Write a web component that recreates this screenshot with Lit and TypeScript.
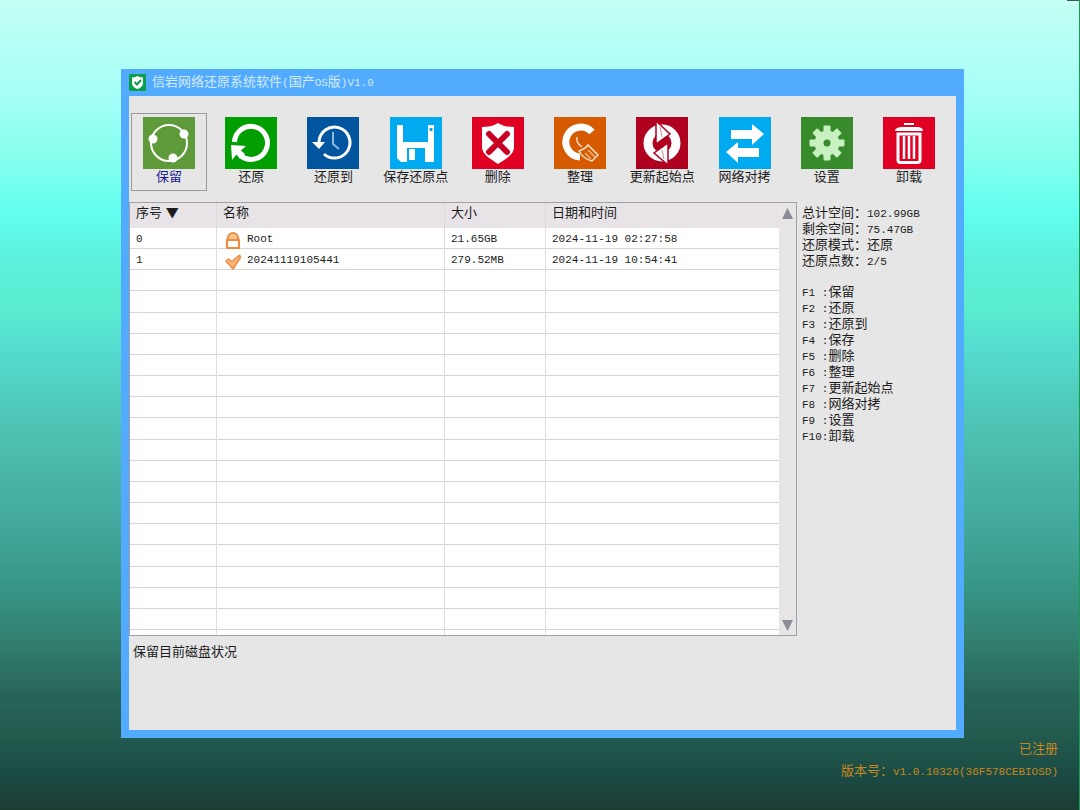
import { LitElement, html, css, svg } from "lit";
import { customElement, state } from "lit/decorators.js";

const tools = [
  { key: "F1 ", label: "保留", hint: "保留", status: "保留目前磁盘状况", bg: "#5f9a3a", art: svg`
    <circle cx="26" cy="26" r="18" fill="none" stroke="#fff" stroke-width="2"/>
    <circle cx="10" cy="22" r="4.5" fill="#fff"/><circle cx="41" cy="17" r="4.5" fill="#fff"/><circle cx="30" cy="41" r="4.5" fill="#fff"/>` },
  { key: "F2 ", label: "还原", hint: "还原", status: "还原", bg: "#009e00", art: svg`
    <path d="M9.500 25A16.500 16.500 0 1 1 16 39" fill="none" stroke="#fff" stroke-width="5"/>
    <path d="M6 28L21 29L16 33.500L20 37L15 42L11.500 37.500L7 43Z" fill="#fff"/>` },
  { key: "F3 ", label: "还原到", hint: "还原到", status: "还原到", bg: "#00559f", art: svg`
    <path d="M12 25A15.500 15.500 0 1 1 17 37" fill="none" stroke="#fff" stroke-width="3"/>
    <path d="M5 25H18L12 32Z" fill="#fff"/>
    <path d="M26 15V27L32 32" fill="none" stroke="#8cb8e0" stroke-width="2"/>` },
  { key: "F4 ", label: "保存还原点", hint: "保存", status: "保存还原点", bg: "#00aaf0", art: svg`
    <path d="M7 8H13V25H38V8H44V45H11L7 41Z" fill="#fff"/>
    <path d="M17 31H35V45H17Z" fill="#00aaf0"/><path d="M19 32H25V43H19Z" fill="#fff"/>
    <path d="M39.500 11H42.500V14H39.500Z" fill="#00aaf0"/>` },
  { key: "F5 ", label: "删除", hint: "删除", status: "删除", bg: "#e00024", art: svg`
    <path d="M26 6C31 9 36 10 42 10V30C42 38 33 42 26 47C19 42 10 38 10 30V10C16 10 21 9 26 6Z" fill="#fff"/>
    <path d="M17 17L35 35M35 17L17 35" stroke="#c80024" stroke-width="6" stroke-linecap="round"/>` },
  { key: "F6 ", label: "整理", hint: "整理", status: "整理", bg: "#d65a00", art: svg`
    <path d="M38 15A15 15 0 1 0 26 40" fill="none" stroke="#fff" stroke-width="7"/>
    <path d="M22 20C25 20 28 24 30 29L34 28L44 38L38 45C33 44 28 40 25 34L27 30C24 27 22 24 22 20Z" fill="#d65a00" stroke="#d65a00" stroke-width="2"/>
    <path d="M23 20C22 25 25 28 28 30M25 34C28 33 32 31 34 28L44 38L38 44C33 43 29 41 25 34Z" fill="none" stroke="#fbe0c8" stroke-width="1.500"/>
    <path d="M31 36L37 42M34 33L41 40" stroke="#f3b888" stroke-width="1.500"/>` },
  { key: "F7 ", label: "更新起始点", hint: "更新起始点", status: "更新起始点", bg: "#b00020", art: svg`
    <circle cx="26" cy="26" r="14" fill="none" stroke="#fff" stroke-width="9"/>
    <path d="M20 4L34 17L20 27Z" fill="#fff" stroke="#b00020" stroke-width="1.500"/>
    <path d="M32 48L18 36L32 26Z" fill="#fff" stroke="#b00020" stroke-width="1.500"/>
    <path d="M24 10L26 20M28 42L26 33" stroke="#d88a98" stroke-width="1"/>` },
  { key: "F8 ", label: "网络对拷", hint: "网络对拷", status: "网络对拷", bg: "#00aaf0", art: svg`
    <path d="M12 13H33V7L45 17L33 28V22H12Z" fill="#fff"/><path d="M40 31H19V25L7 35L19 46V40H40Z" fill="#fff"/>` },
  { key: "F9 ", label: "设置", hint: "设置", status: "设置", bg: "#378b2b", art: svg`
    ${[0, 45, 90, 135].map((a) => svg`<rect x="22.500" y="8.500" width="7" height="35" rx="1" fill="#c8f0c0" transform="rotate(${a} 26 26)"/>`)}
    <circle cx="26" cy="26" r="12.500" fill="#c8f0c0"/><circle cx="26" cy="26" r="3.500" fill="#378b2b"/>` },
  { key: "F10", label: "卸载", hint: "卸载", status: "卸载", bg: "#e00024", art: svg`
    <path d="M12 14C12 11 16 10 19 10H34C37 10 40 11 40 14Z" fill="#fff"/><path d="M21 7H31" stroke="#fff" stroke-width="2"/>
    <path d="M15 17H37V43Q37 45.500 34.500 45.500H17.500Q15 45.500 15 43Z" fill="none" stroke="#fff" stroke-width="3"/>
    <path d="M21 19V42M26 19V42M31 19V42" stroke="#fff" stroke-width="2.500"/>` },
];

const lockIcon = svg`<path d="M3 8V6A5 5 0 0 1 13 6V8" fill="#fbc690" stroke="#f08a3c" stroke-width="2"/>
  <rect x="2" y="8" width="12" height="8" fill="#fff" stroke="#f08a3c" stroke-width="2"/>`;
const checkIcon = svg`<path d="M1 8L3.500 6L7 8.500L14 2.500L16 3.500L8 16Z" fill="#fbb680" stroke="#f08a3c" stroke-width="1.500" stroke-linejoin="round"/>`;

const points = [
  { id: "0", icon: lockIcon, name: "Root", size: "21.65GB", date: "2024-11-19 02:27:58" },
  { id: "1", icon: checkIcon, name: "20241119105441", size: "279.52MB", date: "2024-11-19 10:54:41" },
];

@customElement("app-root")
export class AppRoot extends LitElement {
  @state() private active = 0;

  static styles = css`
    :host {
      position: relative;
      display: flex;
      flex-direction: column;
      min-height: 100vh;
      box-sizing: border-box;
      padding-top: 69px;
      border-right: 1px solid #1c9a50;
      font: 13px/16px "Liberation Sans", "Noto Sans CJK SC", sans-serif;
      color: #1c1c1c;
      background: linear-gradient(#c4fff4 0, #a4fff8 12%, #84ffee 20%, #62fff0 26%, #5cf0dc 32%, #5aecd0 38%, #54dcd0 43%, #50ccbc 49%, #4ab4a8 59%, #44aaa0 64%, #389888 72%, #328070 79%, #286458 86%, #225a4e 91%, #1a4a42 96%, #1c3c34 100%);
    }
    .corner {
      position: absolute;
      top: 0;
      right: 0;
      width: 12px;
      height: 1px;
      background: #405850;
    }
    .latin { font-family: "Liberation Mono", monospace; font-size: 11px; }
    .window {
      flex: 1;
      display: flex;
      flex-direction: column;
      margin: 0 115px 0 121px;
      padding: 0 8px 8px;
      background: #52abff;
    }
    .title {
      display: flex;
      align-items: center;
      gap: 6px;
      height: 27px;
      margin: 0;
      font-size: 13px;
      font-weight: 400;
      color: #d4eaff;
    }
    .title svg { width: 17px; height: 17px; }
    .panel {
      flex: 1;
      display: flex;
      flex-direction: column;
      background: #e6e6e6;
    }
    .toolbar {
      display: flex;
      justify-content: space-between;
      padding: 17px 9px 11px 2px;
    }
    .tool {
      width: 76px;
      height: 78px;
      padding: 3px 0 0;
      display: flex;
      flex-direction: column;
      align-items: center;
      border: 1px solid transparent;
      background: none;
      font: inherit;
      color: inherit;
      white-space: nowrap;
    }
    .tool svg { width: 52px; height: 52px; flex: none; }
    .tool.on { border-color: #999; color: #1a1a90; }
    .content { display: flex; }
    .grid {
      flex: 1;
      display: flex;
      box-sizing: border-box;
      height: 434px;
      border: 1px solid #a0a0a6;
      background: #fff;
    }
    table {
      flex: 1;
      height: 432px;
      border-collapse: separate;
      border-spacing: 0;
      table-layout: fixed;
    }
    .c-id { width: 87px; }
    .c-name { width: 228px; }
    .c-size { width: 101px; }
    th, td {
      padding: 0 6px;
      border-right: 1px solid #dedede;
      text-align: left;
      font-weight: 400;
      white-space: nowrap;
    }
    th:last-child, td:last-child { border-right: 0; }
    td { padding-top: 2px; line-height: 18px; border-bottom: 1px solid #d6d6d6; }
    th { height: 19px; padding-bottom: 6px; background: #e7e3e7; border-color: #dcd8dc; }
    .sort { font-family: "Noto Sans CJK SC", sans-serif; line-height: 12px; }
    .tail td { height: 5px; padding: 0; border-bottom: 0; }
    .name { display: flex; align-items: center; gap: 6px; height: 18px; padding-left: 2px; }
    .name svg { width: 16px; height: 17px; margin-top: 3px; }
    .scroll {
      width: 17px;
      display: flex;
      flex-direction: column;
      justify-content: space-between;
      background: #e7e5e7;
    }
    .scroll button { height: 20px; padding: 0; border: 0; background: none; }
    .scroll svg { display: block; width: 11px; height: 11px; margin: auto; }
    .side { width: 154px; padding: 3px 0 0 5px; }
    .info, .keys { margin: 0; padding: 0; list-style: none; }
    .info { margin-bottom: 15px; }
    .side li { display: flex; align-items: baseline; height: 16px; white-space: pre; }
    .status { margin: 8px 4px; }
    footer {
      height: 72px;
      box-sizing: border-box;
      padding-right: 21px;
      text-align: right;
      line-height: 22px;
      color: #c8861c;
    }
    footer p { margin: 0; }
  `;

  render() {
    return html`
      <div class="corner"></div>
      <main class="window">
        <h1 class="title">
          <svg viewBox="0 0 17 17"><rect width="17" height="17" rx="1" fill="#08a04c"/><path d="M8.500 2Q11 3.500 14 3.500V9Q14 13 8.500 15Q3 13 3 9V3.500Q6 3.500 8.500 2Z" fill="#fff"/><path d="M5.500 8L8 10.500L12 6" fill="none" stroke="#08a04c" stroke-width="2"/></svg>
          <span>信岩网络还原系统软件<span class="latin">(</span>国产<span class="latin">OS</span>版<span class="latin">)V1.0</span></span>
        </h1>
        <div class="panel">
          <nav class="toolbar">
            ${tools.map((t, i) => html`<button class="tool ${i === this.active ? "on" : ""}" @click=${() => (this.active = i)}>
              <svg viewBox="0 0 52 52"><rect width="52" height="52" fill=${t.bg}/>${t.art}</svg>${t.label}</button>`)}
          </nav>
          <div class="content">
            <div class="grid">
              <table>
                <colgroup><col class="c-id"><col class="c-name"><col class="c-size"><col></colgroup>
                <thead><tr><th>序号 <span class="sort">▼</span></th><th>名称</th><th>大小</th><th>日期和时间</th></tr></thead>
                <tbody>
                  ${points.map((p) => html`<tr>
                    <td class="latin">${p.id}</td>
                    <td class="latin"><div class="name"><svg viewBox="0 0 16 17">${p.icon}</svg>${p.name}</div></td>
                    <td class="latin">${p.size}</td><td class="latin">${p.date}</td></tr>`)}
                  ${Array.from({ length: 17 }, () => html`<tr><td>&nbsp;</td><td></td><td></td><td></td></tr>`)}
                  <tr class="tail"><td></td><td></td><td></td><td></td></tr>
                </tbody>
              </table>
              <div class="scroll">
                <button aria-label="向上"><svg viewBox="0 0 11 11"><path d="M5.500 0L11 11H0Z" fill="#8c8c98"/></svg></button>
                <button aria-label="向下"><svg viewBox="0 0 11 11"><path d="M0 0H11L5.500 11Z" fill="#8c8c98"/></svg></button>
              </div>
            </div>
            <aside class="side">
              <ul class="info">
                <li>总计空间：<span class="latin">102.99GB</span></li>
                <li>剩余空间：<span class="latin">75.47GB</span></li>
                <li>还原模式：还原</li>
                <li>还原点数：<span class="latin">2/5</span></li>
              </ul>
              <ul class="keys">${tools.map((t) => html`<li><span class="latin">${t.key}:</span>${t.hint}</li>`)}</ul>
            </aside>
          </div>
          <p class="status">${tools[this.active].status}</p>
        </div>
      </main>
      <footer>
        <p>已注册</p>
        <p>版本号：<span class="latin">v1.0.10326(36F578CEBIOSD)</span></p>
      </footer>`;
  }
}
